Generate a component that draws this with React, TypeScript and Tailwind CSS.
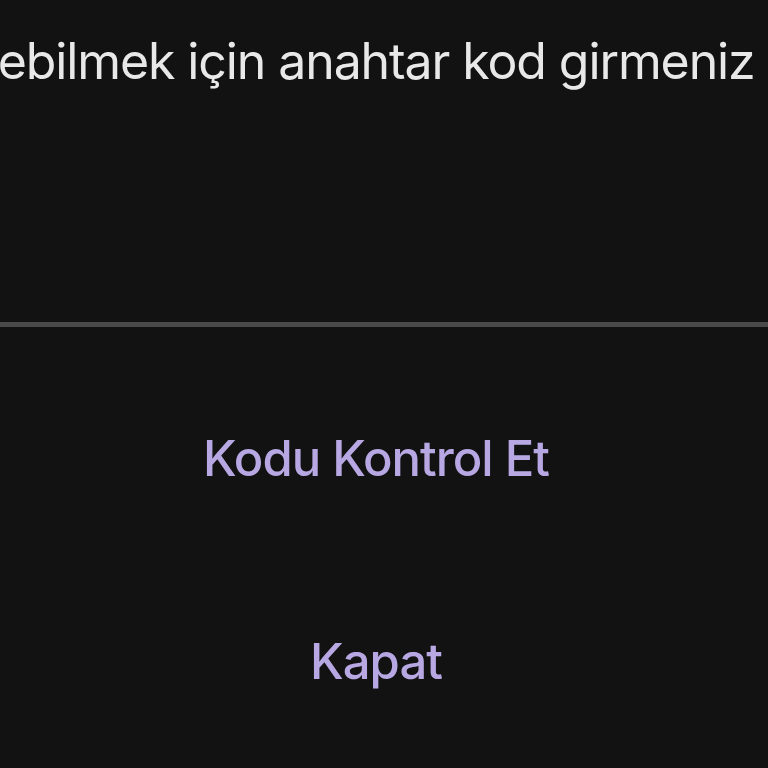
export default function App() {
  return (
    <div
      className="flex h-[768px] w-[768px] flex-col overflow-hidden bg-[#121212]"
      style={{ fontFamily: "Inter, 'Noto Sans', sans-serif" }}
    >
      {/* Message */}
      <div className="flex h-[322px] shrink-0 justify-center overflow-hidden pt-[26px] pl-[12px]">
        <p className="whitespace-nowrap text-[50px] leading-[70px] text-[#e8e8e8] tracking-[-1.1px]">
          Bu içeriğe erişebilmek için anahtar kod girmeniz gerekmektedir.
        </p>
      </div>

      <div className="h-[5px] shrink-0 bg-[#4a4a4a]" />

      {/* Actions */}
      <div className="flex flex-col items-center pr-[16px]">
        <button className="mt-[95px] h-[70px] px-10 text-[49px] font-medium tracking-[-1px] text-[#b7a8e3]">
          Kodu Kontrol Et
        </button>
        <button className="mt-[133px] h-[70px] px-10 text-[49px] font-medium tracking-[-1px] text-[#b7a8e3]">
          Kapat
        </button>
      </div>
    </div>
  );
}
